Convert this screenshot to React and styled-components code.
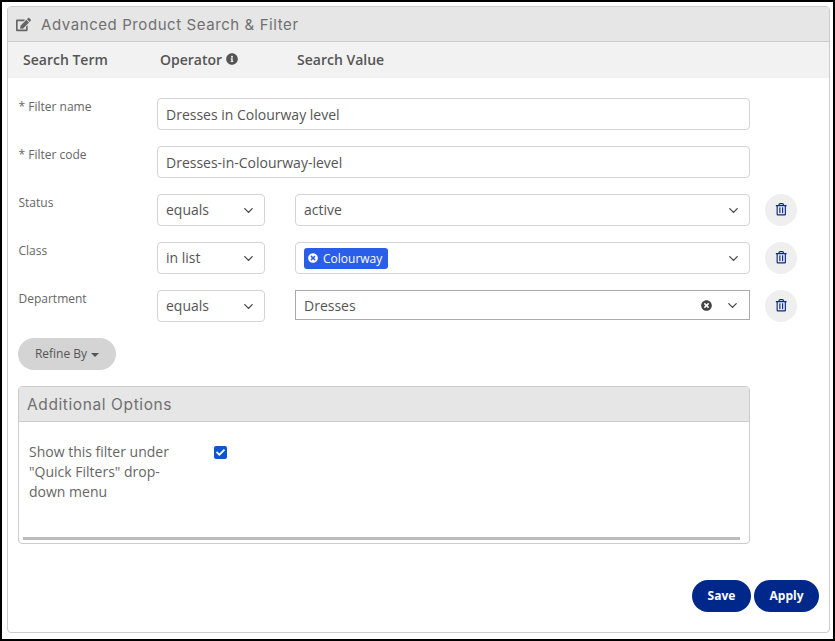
import React from 'react';
import styled, { createGlobalStyle } from 'styled-components';
import { FaEdit, FaInfoCircle, FaRegTrashAlt, FaTimesCircle, FaCheck } from 'react-icons/fa';
import { FiChevronDown } from 'react-icons/fi';

const GlobalStyle = createGlobalStyle`
  html, body { margin: 0; padding: 0; background: #fff; }
  * { box-sizing: border-box; }
  body { font-family: "Open Sans", "Liberation Sans", sans-serif; color: #555; }
`;

const Frame = styled.div`
  width: 835px;
  height: 641px;
  border: 2px solid #000;
  padding: 4px 3px 6px 5px;
  background: #fff;
`;

const Panel = styled.section`
  height: 100%;
  border: 1px solid #ccc;
  border-radius: 4px;
  display: flex;
  flex-direction: column;
`;

const PanelHeader = styled.header`
  height: 35px;
  flex: none;
  background: #e6e6e6;
  border-bottom: 1px solid #ccc;
  display: flex;
  align-items: center;
  gap: 9px;
  padding-left: 8px;
  font-family: Inter, "Noto Sans", sans-serif;
  font-size: 15px;
  letter-spacing: 0.58px;
  color: #707070;
  svg { color: #666; font-size: 15px; margin-right: 1px; }
`;

const ColumnBar = styled.div`
  height: 36px;
  flex: none;
  background: #f2f2f2;
  display: flex;
  align-items: center;
  font-size: 14px;
  font-weight: 600;
  color: #555;
  padding: 0 0 2px 15px;
`;

const ColumnTitle = styled.div`
  width: ${p => p.$w}px;
  display: flex;
  align-items: center;
  gap: 4px;
  svg { font-size: 12px; }
`;

const Body = styled.div`
  flex: 1;
  padding: 20px 0 0 10px;
  display: flex;
  flex-direction: column;
  gap: 16px;
  position: relative;
`;

const Row = styled.div`
  display: flex;
  height: 32px;
`;

const Label = styled.label`
  width: 139px;
  flex: none;
  padding: 1px 0 0 0.5px;
  font-size: 12px;
  line-height: 16px;
  color: #666;
`;

const Field = styled.div`
  height: ${p => (p.$focus ? 30 : 32)}px;
  width: ${p => p.$w}px;
  flex: none;
  background: #fff;
  border: 1px solid ${p => (p.$focus ? '#aaa' : '#d4d4d4')};
  border-radius: ${p => (p.$focus ? '0' : '4px')};
  display: flex;
  align-items: center;
  padding: 0 8px;
  font-size: 14px;
  color: #555;
  margin-right: ${p => p.$mr || 0}px;
`;

const FieldValue = styled.span`
  flex: 1;
  margin-bottom: ${p => (p.$focus ? 0 : 2)}px;
`;

const Chevron = styled(FiChevronDown)`
  font-size: 15px;
  color: #444;
  margin-right: ${p => p.$mr || 0}px;
`;

const ClearIcon = styled(FaTimesCircle)`
  font-size: 11px;
  color: #444;
  margin-right: 13px;
`;

const Tag = styled.span`
  height: 21px;
  padding: 0 6px 0 4px;
  border-radius: 3px;
  background: #2a5de8;
  color: #fff;
  font-size: 12px;
  display: inline-flex;
  align-items: center;
  gap: 5px;
  svg { font-size: 10px; }
`;

const TrashButton = styled.button`
  width: 32px;
  height: 32px;
  margin-left: 15px;
  border: none;
  border-radius: 50%;
  background: #efefef;
  color: #0b2a8a;
  display: flex;
  align-items: center;
  justify-content: center;
  padding: 0 0 1px;
  font-size: 12.5px;
`;

const RefineButton = styled.button`
  width: 98px;
  height: 32px;
  border: none;
  border-radius: 16px;
  background: #d4d4d4;
  color: #555;
  font-family: inherit;
  font-size: 12px;
  font-weight: 500;
  display: flex;
  align-items: center;
  justify-content: center;
  gap: 4px;
  padding: 0 0 2px;
`;

const Caret = styled.span`
  width: 0;
  height: 0;
  border-left: 4px solid transparent;
  border-right: 4px solid transparent;
  border-top: 4px solid #555;
  margin-top: 3px;
`;

const OptionsCard = styled.div`
  width: 732px;
  height: 158px;
  border: 1px solid #ccc;
  border-radius: 4px;
  display: flex;
  flex-direction: column;
`;

const OptionsHeader = styled.div`
  height: 35px;
  flex: none;
  background: #e6e6e6;
  border-bottom: 1px solid #ccc;
  display: flex;
  align-items: center;
  padding-left: 8px;
  font-family: Inter, "Noto Sans", sans-serif;
  font-size: 15.5px;
  letter-spacing: 0.6px;
  color: #707070;
`;

const OptionsBody = styled.div`
  flex: 1;
  display: flex;
  flex-direction: column;
  justify-content: space-between;
  padding: 20px 9px 3px 4px;
`;

const OptionRow = styled.div`
  display: flex;
  padding-left: 6px;
  align-items: flex-start;
`;

const OptionText = styled.div`
  width: 185px;
  flex: none;
  padding-right: 35px;
  font-size: 14px;
  line-height: 20px;
  color: #666;
`;

const CheckBox = styled.span`
  width: 13px;
  height: 13px;
  margin-top: 4px;
  border-radius: 2px;
  background: #0b57d0;
  color: #fff;
  display: flex;
  align-items: center;
  justify-content: center;
  font-size: 9px;
`;

const ScrollBar = styled.div`
  height: 3px;
  background: #bcbcbc;
`;

const Footer = styled.div`
  position: absolute;
  right: 10px;
  bottom: 20px;
  display: flex;
  gap: 3px;
`;

const PrimaryButton = styled.button`
  height: 32px;
  width: ${p => p.$w}px;
  border: none;
  border-radius: 16px;
  background: #00288a;
  color: #fff;
  font-family: inherit;
  font-size: 12px;
  font-weight: 700;
  padding: 0 0 2px;
`;

const filterRows = [
  { label: 'Status', op: 'equals', value: 'active' },
  { label: 'Class', op: 'in list', tag: 'Colourway' },
  { label: 'Department', op: 'equals', value: 'Dresses', focus: true },
];

export default function App() {
  return (
    <Frame>
      <GlobalStyle />
      <Panel>
        <PanelHeader>
          <FaEdit />
          Advanced Product Search &amp; Filter
        </PanelHeader>
        <ColumnBar>
          <ColumnTitle $w={137}>Search Term</ColumnTitle>
          <ColumnTitle $w={137}>Operator <FaInfoCircle /></ColumnTitle>
          <ColumnTitle $w={120}>Search Value</ColumnTitle>
        </ColumnBar>
        <Body>
          <Row>
            <Label>* Filter name</Label>
            <Field $w={593}>Dresses in Colourway level</Field>
          </Row>
          <Row>
            <Label>* Filter code</Label>
            <Field $w={593}>Dresses-in-Colourway-level</Field>
          </Row>
          {filterRows.map(r => (
            <Row key={r.label}>
              <Label>{r.label}</Label>
              <Field $w={108} $mr={30}>
                <FieldValue>{r.op}</FieldValue>
                <Chevron />
              </Field>
              <Field $w={455} $focus={r.focus}>
                <FieldValue $focus={r.focus || !!r.tag}>
                  {r.tag ? <Tag><FaTimesCircle />{r.tag}</Tag> : r.value}
                </FieldValue>
                {r.focus && <ClearIcon />}
                <Chevron $mr={r.focus ? 1 : 0} />
              </Field>
              <TrashButton aria-label="Remove"><FaRegTrashAlt /></TrashButton>
            </Row>
          ))}
          <RefineButton>Refine By <Caret /></RefineButton>
          <OptionsCard>
            <OptionsHeader>Additional Options</OptionsHeader>
            <OptionsBody>
              <OptionRow>
                <OptionText>Show this filter under "Quick Filters" drop-down menu</OptionText>
                <CheckBox><FaCheck /></CheckBox>
              </OptionRow>
              <ScrollBar />
            </OptionsBody>
          </OptionsCard>
          <Footer>
            <PrimaryButton $w={59}>Save</PrimaryButton>
            <PrimaryButton $w={65}>Apply</PrimaryButton>
          </Footer>
        </Body>
      </Panel>
    </Frame>
  );
}
